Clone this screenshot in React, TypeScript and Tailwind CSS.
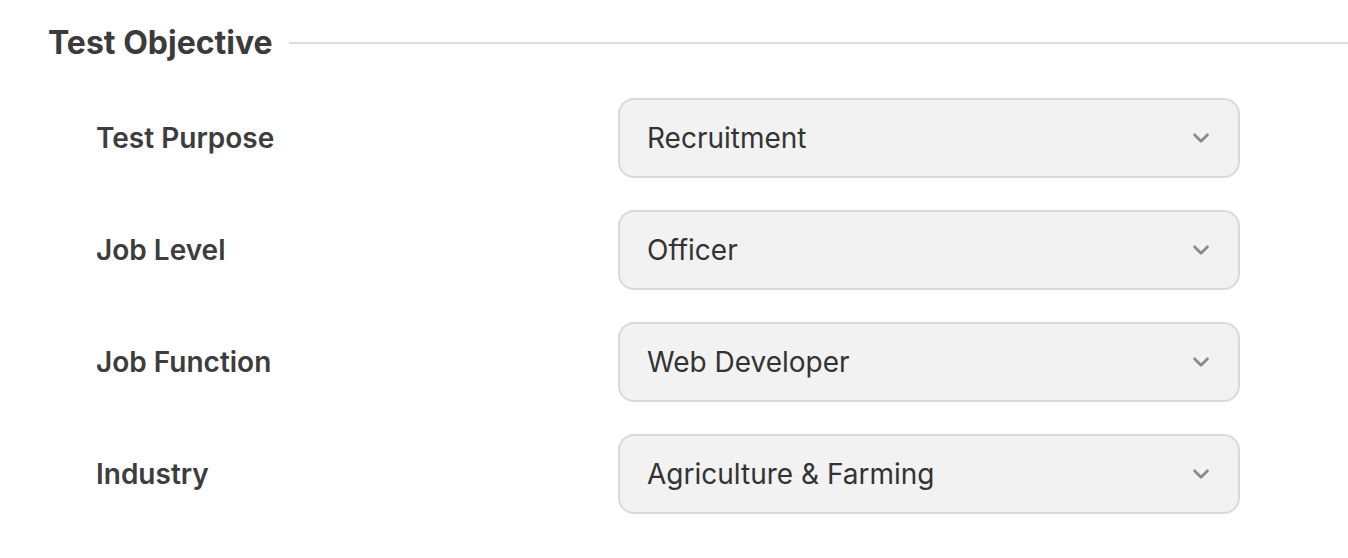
import { ChevronDown } from "lucide-react";

const fields = [
  { label: "Test Purpose", value: "Recruitment" },
  { label: "Job Level", value: "Officer" },
  { label: "Job Function", value: "Web Developer" },
  { label: "Industry", value: "Agriculture & Farming" },
];

export default function App() {
  return (
    <div className="w-[1348px] h-[558px] bg-white pl-12 pt-[23px] font-['Inter',sans-serif] text-[#3a3a3a]">
      {/* Section heading */}
      <div className="flex items-center gap-4 h-10">
        <h2 className="text-[32px] leading-10 font-bold text-[#3b3b3b] whitespace-nowrap">Test Objective</h2>
        <div className="flex-1 h-[2px] bg-[#dcdcdc]" />
      </div>

      {/* Fields */}
      <div className="flex flex-col gap-8 mt-[35px] pl-12">
        {fields.map((f) => (
          <div key={f.label} className="flex items-center">
            <span className="w-[522px] text-[28px] font-semibold text-[#3d3d3d]">{f.label}</span>
            <button className="w-[622px] h-20 flex items-center justify-between pl-[27px] pr-[24px] bg-[#f2f2f2] border-2 border-[#d9d9d9] rounded-2xl text-left">
              <span className="text-[28px] text-[#333333]">{f.value}</span>
              <ChevronDown size={26} strokeWidth={2.5} className="text-[#8a8a8a]" />
            </button>
          </div>
        ))}
      </div>
    </div>
  );
}
